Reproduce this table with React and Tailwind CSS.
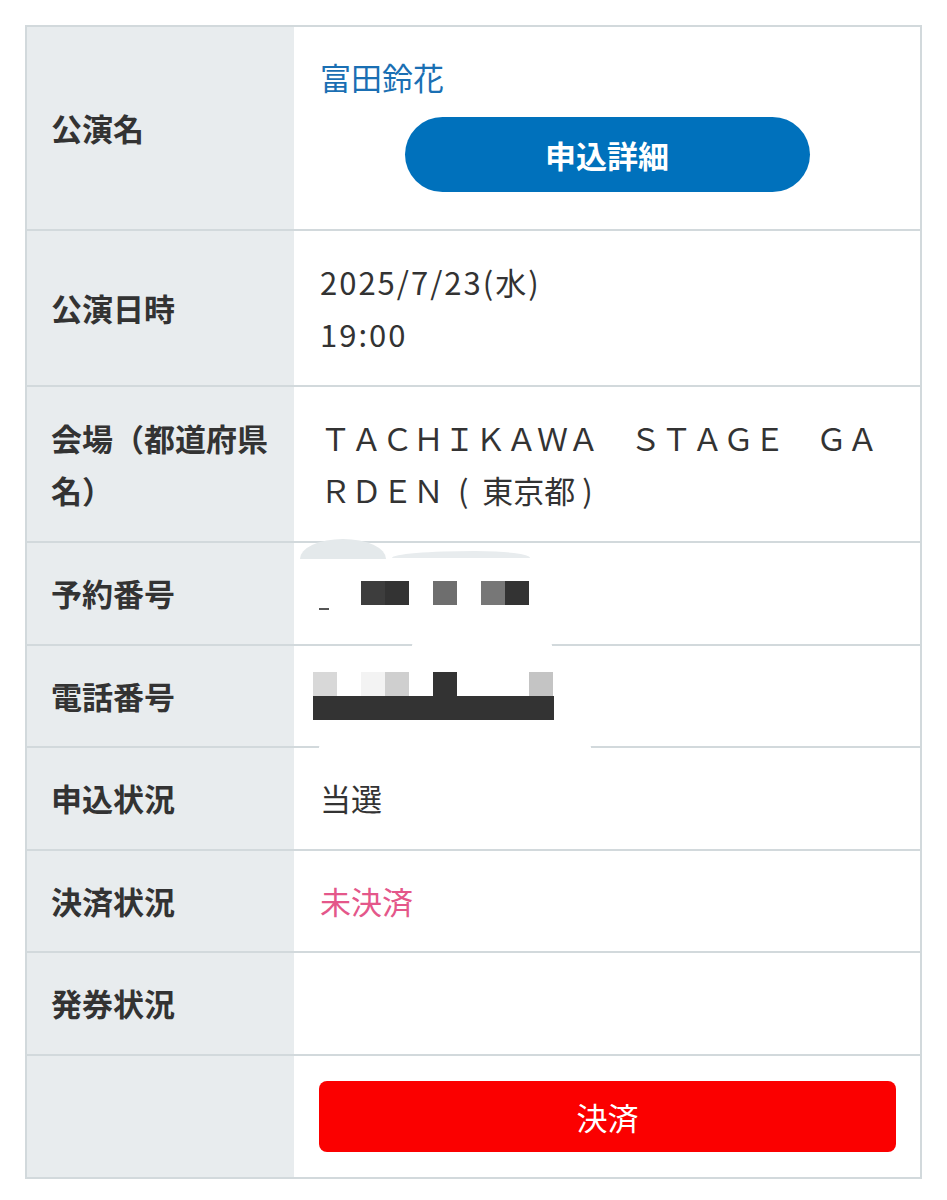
const FONT = { fontFamily: '"Noto Sans CJK JP", "Noto Sans", sans-serif' }

// One row of the ticket table: grey label cell on the left, white value cell on the right.
function Row({ label, children, first, pad = 'pl-[26px] pr-[26px] pt-[24px] pb-[24.5px]' }) {
  return (
    <div className={'relative flex ' + (first ? '' : 'border-t-2 border-[#d2d9dc]')}>
      <div className="w-[267px] shrink-0 bg-[#e8ecee] flex items-center pl-[24px] pr-[20px] font-bold text-[31px] leading-[52px] text-[#333]">
        {label}
      </div>
      <div className={'flex-1 bg-white text-[31px] leading-[52px] text-[#333] ' + pad}>
        {children}
      </div>
    </div>
  )
}

// Mosaic used to hide the reservation / phone numbers in the screenshot.
function Mosaic({ cells }) {
  return (
    <div className="flex">
      {cells.map((c, i) => (
        <div key={i} className="w-[24px] h-[24px]" style={{ background: c || 'transparent' }} />
      ))}
    </div>
  )
}

export default function App() {
  return (
    <div className="bg-white w-[947px] h-[1200px] pt-[25px] pl-[25px]" style={FONT}>
      <div className="w-[897px] border-2 border-[#d2d9dc]">
        <Row label="公演名" first pad="px-[26px] pt-[24px] pb-[24px]">
          <div className="text-[#1a6fb3]">富田鈴花</div>
          <div className="flex justify-center mt-[14px] mb-[13px]">
            <button className="w-[405px] h-[75px] rounded-full bg-[#0071bc] text-white font-bold text-[31px]">
              申込詳細
            </button>
          </div>
        </Row>

        <Row label="公演日時" pad="px-[26px] pt-[24.5px] pb-[25.5px]">
          <div className="tracking-[2px]">2025/7/23(水)</div>
          <div className="tracking-[2px]">19:00</div>
        </Row>

        <Row label="会場（都道府県名）" pad="pl-[26px] pr-[20px] pt-[24.5px] pb-[25.5px]">
          <div className="text-[31px] leading-[52px]">
            {'ＴＡＣＨＩＫＡＷＡ　ＳＴＡＧＥ　ＧＡＲＤＥＮ\u00a0\u00a0(\u00a0\u00a0東京都\u00a0)'}
          </div>
        </Row>

        <Row label="予約番号">
          <div className="absolute left-[273px] -top-[4px] w-[86px] h-[20px] rounded-tl-[50%_100%] rounded-tr-[50%_100%] bg-[#e4e9eb]" />
          <div className="absolute left-[365px] top-[8px] w-[138px] h-[7px] rounded-tl-[60%_100%] rounded-tr-[40%_100%] bg-[#e8ecee]" />
          <div className="h-[52px] -ml-[7px] flex flex-col justify-center">
            <Mosaic cells={[null, null, '#3d3d3d', '#333', null, '#6e6e6e', null, '#777', '#333']} />
          </div>
          <div className="absolute left-[292px] top-[65px] w-[10px] h-[2px] bg-[#555]" />
        </Row>

        <Row label="電話番号">
          <div className="absolute left-[385px] -top-[3px] w-[140px] h-[5px] rounded-full bg-white" />
          <div className="h-[52px] -ml-[7px] flex flex-col justify-center">
            <Mosaic cells={['#d8d8d8', null, '#f3f3f3', '#cfcfcf', null, '#333', null, null, null, '#c4c4c4']} />
            <div className="w-[241px] h-[24px] bg-[#333]" />
          </div>
        </Row>

        <Row label="申込状況">
          <div className="absolute left-[292px] -top-[3px] w-[272px] h-[5px] rounded-full bg-white" />
          当選
        </Row>

        <Row label="決済状況">
          <div className="text-[#e4578a]">未決済</div>
        </Row>

        <Row label="発券状況">
          <div className="h-[52px]" />
        </Row>

        <Row label="" pad="pl-[25px] pr-[24px] pt-[25.5px] pb-[24.5px]">
          <button className="w-full h-[71px] rounded-[8px] bg-[#fb0000] text-white text-[31px]">
            決済
          </button>
        </Row>
      </div>
    </div>
  )
}
